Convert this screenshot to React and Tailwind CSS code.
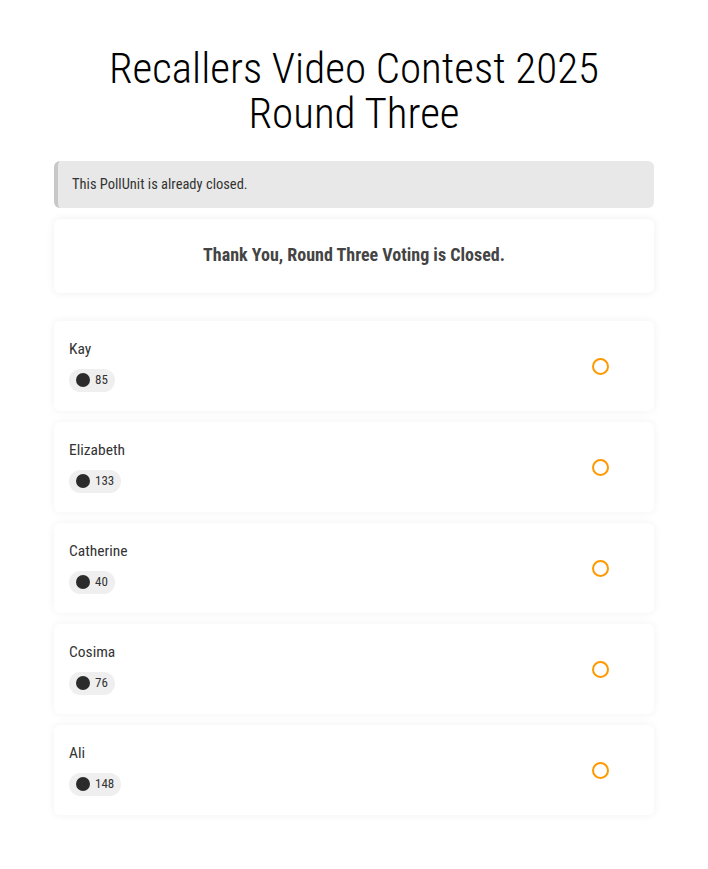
const options = [
  { name: 'Kay', votes: 85 },
  { name: 'Elizabeth', votes: 133 },
  { name: 'Catherine', votes: 40 },
  { name: 'Cosima', votes: 76 },
  { name: 'Ali', votes: 148 },
];

const font = { fontFamily: '"Roboto Condensed", "Liberation Sans Narrow", "DejaVu Sans Condensed", "Liberation Sans", sans-serif' };

const OptionCard = ({ name, votes }) => (
  <div className="flex h-[90px] items-center justify-between rounded-md bg-white pl-[15px] pr-[45px] shadow-[0_0_8px_rgba(0,0,0,0.06)]">
    <div className="flex flex-col items-start">
      <div className="text-[15.5px] leading-[16px] text-[#333]">{name}</div>
      <div className="mt-[12px] flex h-[23px] items-center gap-[5px] rounded-full bg-[#efefef] pl-[7px] pr-[7px]">
        <span className="h-[14px] w-[14px] rounded-full bg-[#2b2b2b]"></span>
        <span className="text-[13px] text-[#333]">{votes}</span>
      </div>
    </div>
    <span className="h-[17px] w-[17px] rounded-full border-2 border-[#ff9900]"></span>
  </div>
);

export default function App() {
  return (
    <div className="min-h-screen bg-white" style={font}>
      <div className="mx-auto w-[600px] pt-[46px] pb-[50px]">
        <h1 className="text-center text-[43px] font-light text-black">
          <div className="leading-[45px]">Recallers Video Contest 2025</div>
          <div className="leading-[45px]">Round Three</div>
        </h1>

        <div className="mt-[25px] flex h-[47px] items-center rounded-md border-l-4 border-[#c8c8c8] bg-[#e8e8e8] pl-[14px]">
          <span className="text-[14.5px] text-[#333]">This PollUnit is already closed.</span>
        </div>

        <div className="mt-[11px] flex h-[74px] items-center justify-center rounded-md bg-white pb-[3px] shadow-[0_0_8px_rgba(0,0,0,0.07)]">
          <span className="text-[18px] font-bold text-[#444]">Thank You, Round Three Voting is Closed.</span>
        </div>

        <div className="mt-[28px] flex flex-col gap-[11px]">
          {options.map((o) => (
            <OptionCard key={o.name} {...o} />
          ))}
        </div>
      </div>
    </div>
  );
}
